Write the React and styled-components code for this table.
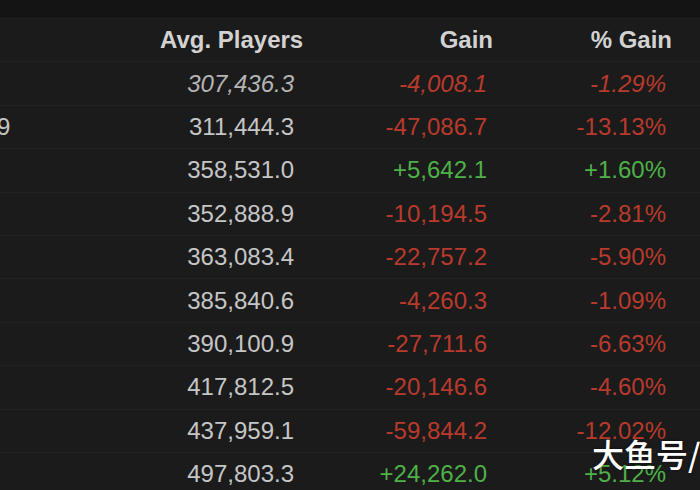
import React from 'react'
import styled, { createGlobalStyle } from 'styled-components'

const rows = [
  { month: 'Last 30 Days', avg: '307,436.3', gain: '-4,008.1', pct: '-1.29%', current: true },
  { month: 'September 2019', avg: '311,444.3', gain: '-47,086.7', pct: '-13.13%' },
  { month: 'August 2019', avg: '358,531.0', gain: '+5,642.1', pct: '+1.60%' },
  { month: 'July 2019', avg: '352,888.9', gain: '-10,194.5', pct: '-2.81%' },
  { month: 'June 2019', avg: '363,083.4', gain: '-22,757.2', pct: '-5.90%' },
  { month: 'May 2019', avg: '385,840.6', gain: '-4,260.3', pct: '-1.09%' },
  { month: 'April 2019', avg: '390,100.9', gain: '-27,711.6', pct: '-6.63%' },
  { month: 'March 2019', avg: '417,812.5', gain: '-20,146.6', pct: '-4.60%' },
  { month: 'February 2019', avg: '437,959.1', gain: '-59,844.2', pct: '-12.02%' },
  { month: 'January 2019', avg: '497,803.3', gain: '+24,262.0', pct: '+5.12%' },
]

const GlobalStyle = createGlobalStyle`
  html, body {
    margin: 0;
    padding: 0;
    background: #1b1b1b;
    overflow: hidden;
  }
`

const Page = styled.div`
  position: relative;
  width: 700px;
  height: 490px;
  overflow: hidden;
  background: #1b1b1b;
  font-family: 'Liberation Sans', Arial, sans-serif;
`

const TopStrip = styled.div`
  height: 18px;
  background: #141414;
  border-bottom: 1px solid #202020;
`

const Table = styled.div`
  margin-left: -167px;
  display: flex;
  flex-direction: column;
`

const Row = styled.div`
  display: grid;
  grid-template-columns: 327px 146px 193px 179px;
  align-items: center;
  height: 43.4px;
  border-bottom: 1px solid #222;
  box-sizing: border-box;
`

const HeadCell = styled.div`
  font-size: 24px;
  font-weight: bold;
  color: #d2d2d2;
  text-align: right;
  padding-right: 6px;
  white-space: nowrap;
`

const Month = styled.div`
  font-size: 24px;
  color: #c4c4c4;
  white-space: nowrap;
  font-style: ${p => (p.$current ? 'italic' : 'normal')};
`

const Cell = styled.div`
  font-size: 24px;
  text-align: right;
  padding-right: 12px;
  white-space: nowrap;
  font-style: ${p => (p.$current ? 'italic' : 'normal')};
  color: ${p =>
    p.$tone === 'up' ? '#4fb048' : p.$tone === 'down' ? '#b83a2c' : p.$current ? '#b4b4b4' : '#c6c6c6'};
`

const Watermark = styled.div`
  position: absolute;
  left: 592px;
  top: 430px;
  font-family: 'Noto Sans CJK SC', sans-serif;
  font-size: 32px;
  font-weight: 500;
  color: #ffffff;
  white-space: nowrap;
  text-shadow: 0 0 3px rgba(0, 0, 0, 0.6);
`

const tone = v => (v.startsWith('+') ? 'up' : 'down')

export default function App() {
  return (
    <Page>
      <GlobalStyle />
      <TopStrip />
      <Table>
        <Row>
          <HeadCell />
          <HeadCell>Avg. Players</HeadCell>
          <HeadCell>Gain</HeadCell>
          <HeadCell>% Gain</HeadCell>
        </Row>
        {rows.map(r => (
          <Row key={r.month}>
            <Month $current={r.current}>{r.month}</Month>
            <Cell $current={r.current}>{r.avg}</Cell>
            <Cell $current={r.current} $tone={tone(r.gain)}>{r.gain}</Cell>
            <Cell $current={r.current} $tone={tone(r.pct)}>{r.pct}</Cell>
          </Row>
        ))}
      </Table>
      <Watermark>大鱼号/</Watermark>
    </Page>
  )
}
